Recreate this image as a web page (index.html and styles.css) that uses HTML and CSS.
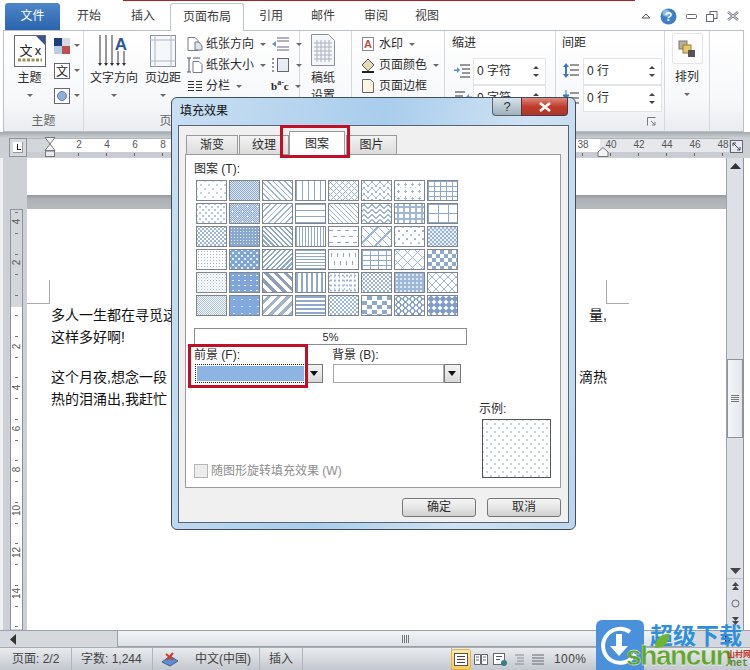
FILE: index.html
```html
<!DOCTYPE html>
<html>
<head>
  <meta charset="utf-8">
  <title>填充效果</title>
  <link rel="stylesheet" href="styles.css">
</head>
<body>
<div class="window">

  <div class="topline"></div>

  <nav class="tabs">
    <span class="tab-file">文件</span>
    <span class="tab t-start">开始</span>
    <span class="tab t-insert">插入</span>
    <span class="tab tab-active">页面布局</span>
    <span class="tab t-ref">引用</span>
    <span class="tab t-mail">邮件</span>
    <span class="tab t-review">审阅</span>
    <span class="tab t-view">视图</span>
    <div class="win-ctrls">
      <svg width="10" height="8" viewBox="0 0 10 8"><path d="M1 6l4-4 4 4z" fill="none" stroke="#555"/></svg>
      <svg width="17" height="17" viewBox="0 0 17 17"><circle cx="8.5" cy="8.5" r="8" fill="#3d7fc9"/><circle cx="6" cy="5" r="3.5" fill="#8dbbe8"/><text x="8.5" y="13" text-anchor="middle" class="help-mark">?</text></svg>
      <svg width="11" height="7" viewBox="0 0 11 7"><rect x=".5" y="1.5" width="10" height="4" rx="1" fill="#fff" stroke="#667"/></svg>
      <svg width="12" height="11" viewBox="0 0 12 11"><rect x="4" y=".5" width="7" height="7" fill="#fff" stroke="#667"/><rect x=".5" y="3.5" width="7" height="7" fill="#fff" stroke="#667"/></svg>
      <svg width="12" height="10" viewBox="0 0 12 10"><path d="M1 1l10 8M11 1L1 9" stroke="#778" stroke-width="2.4"/><path d="M1 1l10 8M11 1L1 9" stroke="#fff" stroke-width=".8"/></svg>
    </div>
  </nav>

  <section class="ribbon">

    <div class="group g-theme">
      <div class="group-body">
        <div class="big-btn theme-btn">
          <svg width="32" height="32" viewBox="0 0 32 32"><rect x=".5" y=".5" width="31" height="31" fill="#fff" stroke="#667"/><path d="M22 1h9v9z" fill="#36558f"/><text x="12" y="20" class="theme-text">文</text><text x="24" y="20" class="theme-text">x</text><path d="M4 25h24" stroke="#9c8f55" stroke-width="3" stroke-dasharray="3 1.5"/></svg>
          <span class="big-label">主题</span>
          <i class="caret"></i>
        </div>
        <div class="theme-side">
          <div class="side-item"><svg width="16" height="16" viewBox="0 0 16 16"><rect width="8" height="8" fill="#1f3f7a"/><rect x="8" width="8" height="8" fill="#d9d9e6"/><rect y="8" width="8" height="8" fill="#b9cde6"/><rect x="8" y="8" width="8" height="8" fill="#c0504d"/></svg><i class="caret"></i></div>
          <div class="side-item"><svg width="16" height="16" viewBox="0 0 16 16"><rect x=".5" y=".5" width="15" height="15" fill="#fff" stroke="#667"/><text x="8" y="13" text-anchor="middle" class="icon-text">文</text></svg><i class="caret"></i></div>
          <div class="side-item"><svg width="16" height="16" viewBox="0 0 16 16"><rect x=".5" y=".5" width="15" height="15" fill="#fff" stroke="#667"/><circle cx="8" cy="8" r="4.5" fill="#8fb0dc" stroke="#5b7fb5"/></svg><i class="caret"></i></div>
        </div>
      </div>
      <div class="group-label">主题</div>
    </div>

    <div class="group g-page">
      <div class="group-body">
        <div class="big-btn dir-btn">
          <svg width="32" height="32" viewBox="0 0 32 32"><path d="M2 0v30M8 0v30M14 0v30M20 16v14M26 16v14" stroke="#333"/><path d="M0 28l2 3 2-3zM6 28l2 3 2-3zM12 28l2 3 2-3zM18 28l2 3 2-3zM24 28l2 3 2-3z" fill="#333"/><text x="23" y="15" text-anchor="middle" class="dir-a">A</text></svg>
          <span class="big-label">文字方向</span>
          <i class="caret"></i>
        </div>
        <div class="big-btn margin-btn">
          <svg width="26" height="32" viewBox="0 0 26 32"><rect x=".5" y=".5" width="25" height="31" fill="#f5f8fb" stroke="#8a929c"/><path d="M5 0v32M21 0v32M0 5h26M0 26h26" stroke="#aeb6c0"/></svg>
          <span class="big-label">页边距</span>
          <i class="caret"></i>
        </div>
        <div class="small-col">
          <div class="small-item"><svg width="16" height="14" viewBox="0 0 16 14"><path d="M1 .5h7l3 3v10H1z" fill="#fff" stroke="#778"/><path d="M8 5h4l3 4v4H8z" fill="#dde3ea" stroke="#778"/></svg>纸张方向<i class="caret"></i></div>
          <div class="small-item"><svg width="16" height="16" viewBox="0 0 16 16"><path d="M6 4.500h6l3 3v8H6z" fill="#fff" stroke="#778"/><path d="M2 1v14M0 1h4M0 15h4M6 1h7" stroke="#556"/></svg>纸张大小<i class="caret"></i></div>
          <div class="small-item"><svg width="16" height="12" viewBox="0 0 16 12"><path d="M1 1.500h6M9 1.500h6M1 4.500h6M9 4.500h6M1 7.500h6M9 7.500h6M1 10.500h6M9 10.500h6" stroke="#333"/></svg>分栏<i class="caret"></i></div>
        </div>
        <div class="small-col break-col">
          <div class="small-item"><svg width="19" height="14" viewBox="0 0 19 14"><path d="M6 1h12M6 4h12M6 10h12M6 13h12" stroke="#667"/><path d="M1 7l4-3v6z" fill="#6c94c6"/></svg><i class="caret"></i></div>
          <div class="small-item"><svg width="19" height="14" viewBox="0 0 19 14"><path d="M1 1h2M1 5h2M1 9h2M1 13h2" stroke="#333"/><rect x="6.500" y=".5" width="11" height="13" fill="#e8edf3" stroke="#667"/></svg><i class="caret"></i></div>
          <div class="small-item"><span class="hyph">b<sup>a-</sup>c</span><i class="caret"></i></div>
        </div>
      </div>
      <div class="group-label page-label">页面设置</div>
    </div>

    <div class="group g-paper">
      <div class="group-body">
        <div class="big-btn paper-btn">
          <svg width="24" height="32" viewBox="0 0 24 32"><path d="M.5 .5h17l6 6v25H.5z" fill="#f4f6f8" stroke="#8a929c"/><path d="M3 9h18M3 13h18M3 17h18M3 21h18M3 25h18M6 6v22M10 6v22M14 6v22M18 6v22" stroke="#aab2bd"/></svg>
          <span class="big-label">稿纸<br>设置</span>
        </div>
      </div>
    </div>

    <div class="group g-bg">
      <div class="small-col bg-col">
        <div class="small-item"><svg width="15" height="14" viewBox="0 0 15 14"><rect x="1.500" y=".5" width="11" height="13" fill="#fff" stroke="#889"/><text x="7" y="11" text-anchor="middle" class="wm-a">A</text></svg>水印<i class="caret"></i></div>
        <div class="small-item"><svg width="15" height="15" viewBox="0 0 15 15"><path d="M1 7l6-6 6 6-6 6z" fill="#e8d9b0" stroke="#556"/><path d="M1 14h12" stroke="#222" stroke-width="2"/></svg>页面颜色<i class="caret"></i></div>
        <div class="small-item"><svg width="15" height="14" viewBox="0 0 15 14"><path d="M1.500 .5h8l3 3v10h-11z" fill="#fdf6dc" stroke="#667"/></svg>页面边框</div>
      </div>
    </div>

    <div class="group g-indent">
      <div class="field-head">缩进</div>
      <div class="field-row">
        <svg width="18" height="14" viewBox="0 0 18 14"><path d="M6 1h10M8 5h8M8 9h8M6 13h10" stroke="#333"/><path d="M0 5.500h3V3l3 3-3 3V7H0z" fill="#5b8fd0"/></svg>
        <div class="spin"><span>0 字符</span><b class="spin-arrows"></b></div>
      </div>
      <div class="field-row">
        <svg width="18" height="14" viewBox="0 0 18 14"><path d="M1 1h10M1 5h8M1 9h8M1 13h10" stroke="#333"/><path d="M18 5.500h-3V3l-3 3 3 3V7h3z" fill="#5b8fd0"/></svg>
        <div class="spin"><span>0 字符</span><b class="spin-arrows"></b></div>
      </div>
    </div>

    <div class="group g-space">
      <div class="field-head">间距</div>
      <div class="field-row">
        <svg width="18" height="16" viewBox="0 0 18 16"><path d="M8 2h9M8 7h9M8 12h9" stroke="#333"/><path d="M4 0l3 4H1zM4 15l3-4H1z" fill="#3b76c4"/><path d="M3 4h2v7H3z" fill="#3b76c4"/></svg>
        <div class="spin"><span>0 行</span><b class="spin-arrows"></b></div>
      </div>
      <div class="field-row">
        <svg width="18" height="16" viewBox="0 0 18 16"><path d="M8 3h9M8 8h9M8 13h9" stroke="#333"/><path d="M4 0v6M1 5l3 4 3-4zM4 15v-2" stroke="#3b76c4" fill="#3b76c4"/></svg>
        <div class="spin"><span>0 行</span><b class="spin-arrows"></b></div>
      </div>
      <svg class="launcher" width="9" height="9" viewBox="0 0 9 9"><path d="M.5 8.500v-8h8M4 4l4 4M5 8h3V5" fill="none" stroke="#778"/></svg>
    </div>

    <div class="group g-arrange">
      <div class="arrange-box">
        <svg width="18" height="18" viewBox="0 0 18 18"><rect x="1" y="1" width="8" height="8" fill="#b9b09a" stroke="#777"/><rect x="5" y="5" width="8" height="8" fill="#e8c76a" stroke="#9a7a2a"/><rect x="10" y="10" width="7" height="7" fill="#555"/></svg>
      </div>
      <span class="big-label">排列</span>
      <i class="caret"></i>
    </div>

  </section>

  <div class="rulerbar">
    <div class="ruler-corner"><span></span></div>
    <div class="hruler">
      <span>2</span><span>4</span><span>6</span><span>8</span><span>10</span><span>12</span><span>14</span><span>16</span><span>18</span><span>20</span><span>22</span><span>24</span><span>26</span><span>28</span><span>30</span><span>32</span><span>34</span><span>36</span><span>38</span><span>40</span><span>42</span><span>44</span><span>46</span><span>48</span>
      <svg class="indent-left" width="12" height="20" viewBox="0 0 12 20"><path d="M1 .5h10L6 7l5 6.500H1L6 7z" fill="#f2f3f5" stroke="#777"/><rect x="1.500" y="14" width="9" height="5.500" fill="#e8eaed" stroke="#777"/></svg>
      <svg class="indent-right" width="12" height="10" viewBox="0 0 12 10"><path d="M1 9.500V5l5-4.500L11 5v4.500z" fill="#f2f3f5" stroke="#777"/></svg>
    </div>
    <div class="ruler-toggle">
      <svg width="13" height="13" viewBox="0 0 13 13"><rect x=".5" y=".5" width="12" height="12" fill="#e6e9ed" stroke="#667"/><path d="M3 3l7 7M3 3h3M3 3v3M10 10H7M10 10V7" fill="none" stroke="#445"/></svg>
    </div>
  </div>

  <div class="docrow">
    <div class="vruler-col">
      <div class="vruler">
        <div class="vruler-top"><span>4</span><span>2</span></div>
        <div class="vruler-main"><span>2</span><span>4</span><span>6</span><span>8</span><span>10</span><span>12</span><span>14</span></div>
      </div>
    </div>

    <main class="page-area">
      <div class="page-end"></div>
      <div class="page-gap"></div>
      <div class="page-head">
        <span class="crop crop-left"></span>
        <span class="crop crop-right"></span>
      </div>
      <div class="page-text">
        <p class="line"><span>多人一生都在寻觅这</span><span>量,</span></p>
        <p class="line"><span>这样多好啊!</span></p>
        <p class="line para-start"><span>这个月夜,想念一段</span><span>滴热</span></p>
        <p class="line"><span>热的泪涌出,我赶忙</span></p>
      </div>
    </main>

    <div class="vscroll">
      <svg class="vs-up" width="11" height="6" viewBox="0 0 11 6"><path d="M5.500 0L11 6H0z" fill="#333"/></svg>
      <div class="vs-thumb"><i></i></div>
      <svg class="vs-down" width="11" height="6" viewBox="0 0 11 6"><path d="M5.500 6L11 0H0z" fill="#444"/></svg>
      <div class="vs-browse">
        <svg width="9" height="9" viewBox="0 0 9 9"><path d="M4.500 0l3.500 4H1zM4.500 4l3.500 4H1z" fill="#444"/></svg>
        <svg width="9" height="9" viewBox="0 0 9 9"><circle cx="4.500" cy="4.500" r="3.500" fill="none" stroke="#667"/></svg>
        <svg width="9" height="9" viewBox="0 0 9 9"><path d="M4.500 5l3.500-4H1zM4.500 9l3.500-4H1z" fill="#444"/></svg>
      </div>
    </div>
  </div>

  <div class="hscroll">
    <svg class="hs-left" width="6" height="11" viewBox="0 0 6 11"><path d="M0 5.500L6 0v11z" fill="#333"/></svg>
    <div class="hs-thumb"><i></i></div>
    <svg class="hs-right" width="6" height="11" viewBox="0 0 6 11"><path d="M6 5.500L0 0v11z" fill="#333"/></svg>
  </div>

  <footer class="status">
    <span class="st st-page">页面: 2/2</span>
    <span class="st st-words">字数: 1,244</span>
    <span class="st st-lang">
      <svg width="18" height="16" viewBox="0 0 18 16"><path d="M1 11l8-6 8 5-8 5z" fill="#5b8fd0" stroke="#3b5f95"/><path d="M5 3l7 6M12 2L6 9" stroke="#c8402f" stroke-width="2"/></svg>
      <em>中文(中国)</em>
    </span>
    <span class="st st-ins">插入</span>
    <div class="views">
      <span class="view view-on"><svg width="14" height="13" viewBox="0 0 14 13"><rect x=".5" y=".5" width="13" height="12" fill="#fff" stroke="#555"/><path d="M3 3.500h8M3 6.500h8M3 9.500h8" stroke="#444"/></svg></span>
      <span class="view"><svg width="14" height="13" viewBox="0 0 14 13"><path d="M.5 1.500h6v10h-6zM7.500 1.500h6v10h-6zM2 4h3M2 7h3M9 4h3M9 7h3" fill="#fff" stroke="#667"/></svg></span>
      <span class="view"><svg width="14" height="13" viewBox="0 0 14 13"><rect x=".5" y=".5" width="11" height="11" fill="#fff" stroke="#667"/><path d="M3 3.500h6M3 6.500h4" stroke="#556"/><circle cx="11" cy="10" r="3" fill="#3c7a8e"/></svg></span>
      <span class="view"><svg width="14" height="13" viewBox="0 0 14 13"><path d="M3 2h9M5 5h7M5 8h7M3 11h9" stroke="#889"/></svg></span>
      <span class="view"><svg width="14" height="13" viewBox="0 0 14 13"><path d="M1 2h12M1 5h12M1 8h12M1 11h12" stroke="#667"/></svg></span>
    </div>
    <span class="zoom-val">100%</span>
  </footer>

  <!-- dialog floats over the document -->
  <div class="dialog">
    <div class="dlg-title">
      <span>填充效果</span>
      <div class="dlg-btns">
        <span class="dlg-help">?</span>
        <span class="dlg-close">
          <svg width="14" height="10" viewBox="0 0 14 10"><path d="M2 1l10 8M12 1L2 9" stroke="#fff" stroke-width="2.600"/></svg>
        </span>
      </div>
    </div>
    <div class="dlg-panel">
      <div class="dlg-tabs">
        <span class="dtab dt-grad">渐变</span>
        <span class="dtab dt-tex">纹理</span>
        <span class="dtab dtab-on">图案</span>
        <span class="dtab dt-pic">图片</span>
      </div>
      <div class="dlg-page">
        <div class="dlg-label">图案 (T):</div>
        <div class="patterns">
          <i class="sw p-d5"></i><i class="sw p-c50"></i><i class="sw p-bs"></i><i class="sw p-v"></i><i class="sw p-zs"></i><i class="sw p-wave"></i><i class="sw p-conf"></i><i class="sw p-grid"></i>
          <i class="sw p-d10"></i><i class="sw p-c60"></i><i class="sw p-fs"></i><i class="sw p-h"></i><i class="sw p-fd"></i><i class="sw p-wave2"></i><i class="sw p-dgrid"></i><i class="sw p-lgrid"></i>
          <i class="sw p-d20"></i><i class="sw p-d70"></i><i class="sw p-bw"></i><i class="sw p-vd"></i><i class="sw p-hd"></i><i class="sw p-dbrick"></i><i class="sw p-spar"></i><i class="sw p-chk"></i>
          <i class="sw p-d25"></i><i class="sw p-d75"></i><i class="sw p-fw"></i><i class="sw p-hn"></i><i class="sw p-vdash"></i><i class="sw p-brick"></i><i class="sw p-weave"></i><i class="sw p-chkl"></i>
          <i class="sw p-d30"></i><i class="sw p-d80"></i><i class="sw p-bt"></i><i class="sw p-vt"></i><i class="sw p-conf2"></i><i class="sw p-small"></i><i class="sw p-sph"></i><i class="sw p-dia"></i>
          <i class="sw p-d40"></i><i class="sw p-d90"></i><i class="sw p-ft"></i><i class="sw p-ht"></i><i class="sw p-ddia"></i><i class="sw p-lconf"></i><i class="sw p-scale"></i><i class="sw p-ball"></i>
        </div>
        <div class="pat-name">5%</div>
        <div class="color-row">
          <div class="color-col">
            <div class="dlg-label">前景 (F):</div>
            <div class="combo">
              <div class="combo-val combo-focus"><span></span></div>
              <b class="combo-btn"></b>
            </div>
          </div>
          <div class="color-col">
            <div class="dlg-label">背景 (B):</div>
            <div class="combo">
              <div class="combo-val"></div>
              <b class="combo-btn"></b>
            </div>
          </div>
        </div>
        <div class="lower">
          <label class="rotate"><span class="check"></span>随图形旋转填充效果 (W)</label>
          <div class="sample">
            <div class="dlg-label">示例:</div>
            <div class="sample-box"></div>
          </div>
        </div>
      </div>
      <div class="dlg-actions">
        <span class="btn">确定</span>
        <span class="btn">取消</span>
      </div>
    </div>
    <span class="mark mark-tab"></span>
    <span class="mark mark-fore"></span>
  </div>

  <!-- site watermark -->
  <div class="watermark">
    <div class="wm-square">
      <svg width="48" height="50" viewBox="0 0 48 50"><path d="M34 12a17 17 0 1 0 5 22" fill="none" stroke="#fff" stroke-width="4"/><path d="M20 14h6v12h6L23 36 14 26h6z" fill="#fff"/></svg>
    </div>
    <span class="wm-cn">超级下载</span>
    <svg class="wm-leaf" width="16" height="16" viewBox="0 0 16 16"><path d="M1 15C1 6 7 1 15 1c0 9-5 14-14 14z" fill="#6fb52c"/></svg>
    <span class="wm-en">shancun</span>
    <span class="wm-site">山村网</span>
    <span class="wm-net">.net</span>
  </div>

</div>
</body>
</html>
```

FILE: styles.css
```css
html, body {
  margin: 0;
  padding: 0;
}

body {
  background: #fff;
  color: #2b2b2b;
  font: 12px/1.2 "Liberation Sans", "Noto Sans CJK SC", sans-serif;
}

.window {
  position: relative;
  width: 750px;
  height: 670px;
  overflow: hidden;
  background: #fff;
}

.topline {
  height: 1px;
  margin: 0 115px 0 123px;
  background: #a8222a;
}

/* tab row */

.tabs {
  display: flex;
  align-items: flex-end;
  height: 29px;
  padding-left: 5px;
}

.tab-file {
  width: 55px;
  height: 27px;
  line-height: 26px;
  text-align: center;
  color: #fff;
  background: linear-gradient(#4f86c8, #2a64ad);
  border-radius: 3px 3px 0 0;
}

.tab {
  height: 27px;
  line-height: 27px;
  color: #3b3b3b;
  font-size: 12px;
}

.t-start { margin-left: 17px; }
.t-insert { margin-left: 30px; }
.t-ref { margin-left: 15px; }
.t-mail { margin-left: 28px; }
.t-review { margin-left: 29px; }
.t-view { margin-left: 27px; }

.tab-active {
  position: relative;
  z-index: 1;
  box-sizing: border-box;
  width: 74px;
  height: 28px;
  margin-left: 15px;
  margin-bottom: -1px;
  text-align: center;
  background: #fff;
  border: 1px solid #c0c6ce;
  border-bottom: 0;
  border-radius: 3px 3px 0 0;
}

.win-ctrls {
  display: flex;
  align-items: center;
  gap: 9px;
  height: 28px;
  margin-left: auto;
  margin-right: 11px;
}

.help-mark {
  font: bold 13px "Liberation Sans", sans-serif;
  fill: #fff;
}

/* ribbon */

.ribbon {
  display: flex;
  height: 102px;
  box-sizing: border-box;
  margin: 0 6px 0 3px;
  border: 1px solid #b9c0c9;
  background: linear-gradient(#fff, #f7f8fa 70%, #e9ecf0);
}

.group {
  display: flex;
  flex-direction: column;
  box-sizing: border-box;
  border-right: 1px solid #d5d9df;
}

.group-body {
  display: flex;
  flex: 1;
}

.group-label {
  height: 20px;
  line-height: 20px;
  text-align: center;
  color: #666;
}

.g-theme { width: 80px; }
.g-page { width: 216px; }
.g-paper { width: 52px; }
.g-bg { width: 93px; }
.g-indent { width: 111px; padding-left: 7px; }
.g-space { width: 109px; padding-left: 6px; position: relative; }
.g-arrange { width: 45px; align-items: center; }

.page-label {
  padding-right: 16px;
}

.big-btn {
  display: flex;
  flex-direction: column;
  align-items: center;
  padding-top: 4px;
}

.big-label {
  margin-top: 2px;
  line-height: 18px;
  text-align: center;
  white-space: nowrap;
}

.caret {
  display: inline-block;
  width: 0;
  height: 0;
  margin: 6px 0 0 4px;
  border: 3px solid transparent;
  border-top: 3px solid #6a6a6a;
  border-bottom: 0;
}

.big-btn .caret {
  margin: 7px 0 0;
}

.theme-btn {
  width: 49px;
  padding-left: 1px;
}

.theme-text {
  font: 13px "Noto Sans CJK SC", sans-serif;
  fill: #222;
  text-anchor: middle;
}

.icon-text {
  font: 12px "Noto Sans CJK SC", sans-serif;
  fill: #222;
}

.theme-side {
  display: flex;
  flex-direction: column;
  gap: 9px;
  padding-top: 7px;
}

.side-item {
  display: flex;
  align-items: flex-start;
  height: 16px;
}

.dir-btn {
  width: 48px;
  margin-left: 6px;
}

.dir-a {
  font: bold 17px "Liberation Sans", sans-serif;
  fill: #2f5597;
}

.wm-a {
  font: bold 11px "Liberation Sans", sans-serif;
  fill: #c0504d;
}

.margin-btn {
  width: 36px;
  margin-left: 7px;
}

.small-col {
  display: flex;
  flex-direction: column;
  gap: 5px;
  padding-top: 5px;
  margin-left: 6px;
}

.small-item {
  display: flex;
  align-items: center;
  gap: 3px;
  height: 16px;
  white-space: nowrap;
}

.small-item .caret {
  margin: 0 0 0 3px;
}

.small-item svg {
  flex: none;
}

.break-col {
  margin-left: 5px;
}

.hyph {
  font: bold 11px "Liberation Serif", serif;
}

.hyph sup {
  font-size: 8px;
  line-height: 0;
}

.paper-btn {
  width: 100%;
  padding-top: 3px;
  padding-left: 11px;
  align-items: flex-start;
}

.paper-btn .big-label {
  margin-top: 3px;
}

.bg-col {
  margin-left: 9px;
}

.field-head {
  height: 15px;
  margin-bottom: 6px;
  padding-top: 5px;
  line-height: 15px;
}

.field-row {
  display: flex;
  align-items: center;
  gap: 3px;
  height: 27px;
}

.g-indent .field-row {
  gap: 1px;
  padding-left: 2px;
}

.spin {
  display: flex;
  justify-content: space-between;
  align-items: center;
  box-sizing: border-box;
  width: 73px;
  height: 27px;
  margin-bottom: -1px;
  padding: 0 6px 0 3px;
  background: #fff;
  border: 1px solid #e0e3e8;
}

.g-space .spin {
  width: 79px;
}

.spin-arrows {
  position: relative;
  width: 0;
  height: 11px;
  border: 3px solid transparent;
  border-top: 0;
  border-bottom: 0;
}

.spin-arrows::before,
.spin-arrows::after {
  content: "";
  position: absolute;
  left: -3px;
  border: 3px solid transparent;
}

.spin-arrows::before {
  top: 0;
  border-top: 0;
  border-bottom-color: #444;
}

.spin-arrows::after {
  bottom: 0;
  border-bottom: 0;
  border-top-color: #444;
}

.launcher {
  position: absolute;
  right: 8px;
  bottom: 5px;
}

.arrange-box {
  display: flex;
  align-items: center;
  justify-content: center;
  box-sizing: border-box;
  width: 31px;
  height: 31px;
  margin-top: 2px;
  border: 1px solid #e3e5e8;
  border-radius: 2px;
}

.g-arrange .big-label {
  margin-top: 4px;
}

.g-arrange .caret {
  margin: 7px 0 0;
}

/* rulers */

.rulerbar {
  display: flex;
  height: 26px;
  padding-top: 6px;
  box-sizing: border-box;
  background: linear-gradient(#a4a9af, #ccd0d5 6px, #ccd0d5);
}

.ruler-corner {
  box-sizing: border-box;
  width: 18px;
  height: 19px;
  margin-left: 9px;
  padding: 3px;
  border: 1px solid #8c939b;
  background: #d5d8dc;
}

.ruler-corner span {
  position: relative;
  display: block;
  box-sizing: border-box;
  height: 11px;
  background: #fff;
  border-right: 1px solid #999;
  border-bottom: 1px solid #999;
}

.ruler-corner span::after {
  content: "";
  position: absolute;
  left: 4px;
  top: 2px;
  width: 3px;
  height: 5px;
  border-left: 1px solid #222;
  border-bottom: 1px solid #222;
}

.hruler {
  position: relative;
  display: flex;
  width: 702px;
  height: 19px;
  padding-left: 38px;
  box-sizing: border-box;
  background:
    linear-gradient(#c8ccd2, #c8ccd2) 0 13px / 100% 6px no-repeat,
    linear-gradient(to right, #d3d6db 23px, #fff 23px, #fff 573px, #e6e8eb 573px);
  border-top: 1px solid #b0b5bb;
}

.hruler span {
  position: relative;
  flex: none;
  width: 28px;
  line-height: 12px;
  text-align: center;
  font-size: 10px;
  color: #555;
}

.hruler span::after {
  content: "";
  position: absolute;
  left: 13px;
  top: 14px;
  width: 1px;
  height: 3px;
  background: #666;
}

.indent-left {
  position: absolute;
  left: 17px;
  top: -2px;
}

.indent-right {
  position: absolute;
  left: 570px;
  top: 8px;
}

.ruler-toggle {
  margin-left: 1px;
  padding-top: 2px;
}

.docrow {
  display: flex;
  height: 472px;
}

.vruler-col {
  flex: none;
  box-sizing: border-box;
  width: 27px;
  padding: 51px 0 0 7px;
  background: #cdd1d6;
  border-left: 3px solid #eef0f2;
}

.vruler {
  width: 13px;
  height: 421px;
  box-sizing: border-box;
  border: 1px solid #8c939b;
  border-bottom: 0;
  color: #555;
  font-size: 10px;
}

.vruler-top,
.vruler-main {
  position: relative;
  background-image: repeating-linear-gradient(#777 0 1px, transparent 1px 20.75px);
  background-repeat: no-repeat;
  background-size: 3px 100%;
}

.vruler-top {
  height: 97px;
  background-color: #d3d6db;
  background-position: 4px 2px;
}

.vruler-main {
  height: 322px;
  background-color: #fff;
  background-position: 4px 8px;
}

.vruler span {
  position: absolute;
  left: 0;
  width: 11px;
  line-height: 11px;
  text-align: center;
  transform: rotate(-90deg);
}

.vruler-top span:nth-child(1) { top: 6px; }
.vruler-top span:nth-child(2) { top: 47px; }
.vruler-main span:nth-child(1) { top: 34px; }
.vruler-main span:nth-child(2) { top: 75px; }
.vruler-main span:nth-child(3) { top: 116px; }
.vruler-main span:nth-child(4) { top: 157px; }
.vruler-main span:nth-child(5) { top: 198px; }
.vruler-main span:nth-child(6) { top: 240px; }
.vruler-main span:nth-child(7) { top: 281px; }

.page-area {
  flex: none;
  width: 699px;
  background: #fff;
}

.page-end {
  height: 37px;
}

.page-gap {
  height: 14px;
  background: linear-gradient(#959a9f, #aeb2b6 30%, #b6babe);
}

.page-head {
  display: flex;
  justify-content: space-between;
  box-sizing: border-box;
  width: 602px;
  height: 95px;
  padding-top: 71px;
}

.crop {
  width: 23px;
  height: 24px;
  box-sizing: border-box;
  border-bottom: 1px solid #aaa;
}

.crop-left {
  border-right: 1px solid #aaa;
}

.crop-right {
  border-left: 1px solid #aaa;
}

.page-text {
  width: 556px;
  margin-left: 24px;
  font-size: 14px;
  line-height: 22px;
  color: #111;
}

.line {
  display: flex;
  justify-content: space-between;
  margin: 0;
}

.para-start {
  margin-top: 18px;
}

.vscroll {
  display: flex;
  flex-direction: column;
  align-items: center;
  flex: none;
  box-sizing: border-box;
  width: 18px;
  padding-top: 5px;
  background: #dde1e7;
  border-left: 1px solid #9ba2aa;
  border-right: 1px solid #8c939b;
}

.vs-thumb {
  display: flex;
  align-items: center;
  justify-content: center;
  box-sizing: border-box;
  width: 16px;
  height: 79px;
  margin-top: 190px;
  background: linear-gradient(to right, #f4f6f8, #e2e6eb);
  border: 1px solid #8c939b;
}

.vs-thumb i,
.hs-thumb i {
  display: block;
  width: 8px;
  height: 7px;
  background: repeating-linear-gradient(#777 0 1px, transparent 1px 2px);
}

.vs-down {
  margin-top: 130px;
}

.vs-browse {
  display: flex;
  flex-direction: column;
  align-items: center;
  gap: 8px;
  width: 100%;
  margin-top: 4px;
  padding-top: 3px;
  border-top: 1px solid #bcc2c9;
}

.hscroll {
  display: flex;
  align-items: center;
  height: 17px;
  box-sizing: border-box;
  padding-left: 10px;
  background: #d5d9de;
  border-top: 1px solid #9ba2aa;
}

.hs-thumb {
  display: flex;
  align-items: center;
  justify-content: center;
  box-sizing: border-box;
  width: 575px;
  height: 16px;
  margin-left: 101px;
  background: linear-gradient(#f2f4f6, #dde1e6);
  border-left: 1px solid #9ba2aa;
  border-bottom: 1px solid #9ba2aa;
}

.hs-thumb i {
  width: 7px;
  height: 8px;
  background: repeating-linear-gradient(to right, #777 0 1px, transparent 1px 2px);
}

.hs-right {
  margin-left: 33px;
}

/* status bar */

.status {
  display: flex;
  align-items: center;
  height: 23px;
  box-sizing: border-box;
  background: linear-gradient(#e9ebee, #c3c8ce);
  border-top: 1px solid #a8aeb5;
  color: #444;
}

.st {
  display: flex;
  align-items: center;
  height: 100%;
  box-sizing: border-box;
  border-right: 1px solid #b1b6bc;
  white-space: nowrap;
}

.st-page { width: 72px; padding-left: 12px; }
.st-words { width: 81px; padding-left: 9px; }
.st-lang { width: 107px; padding-left: 8px; }
.st-ins { width: 43px; padding-left: 9px; }

.st-lang em {
  margin-left: 16px;
  font-style: normal;
}

.views {
  display: flex;
  align-items: center;
  gap: 3px;
  height: 100%;
  margin-left: 148px;
  border-left: 1px solid #b1b6bc;
}

.view {
  display: flex;
  align-items: center;
  justify-content: center;
  width: 16px;
  height: 19px;
}

.view-on {
  width: 18px;
  background: linear-gradient(#fdeaa5, #f8c95b);
  border-radius: 2px;
  box-shadow: 0 0 0 1px #e0b44f;
}

.zoom-val {
  margin-left: 8px;
  letter-spacing: .4px;
}

/* dialog */

.dialog {
  position: absolute;
  left: 171px;
  top: 97px;
  width: 405px;
  height: 433px;
  box-sizing: border-box;
  border: 1px solid #3f4d5c;
  border-radius: 6px;
  background: linear-gradient(100deg, #c9dff2, #a9cdec 45%, #cfe2f3 75%, #bcd6ee);
}

.dlg-title {
  display: flex;
  justify-content: space-between;
  height: 27px;
  padding-left: 8px;
  line-height: 27px;
  color: #111;
}

.dlg-btns {
  display: flex;
  height: 18px;
  margin-right: 7px;
}

.dlg-help {
  box-sizing: border-box;
  width: 29px;
  line-height: 17px;
  text-align: center;
  font-size: 13px;
  color: #333;
  background: linear-gradient(#d8e3ec, #9fb0bd);
  border: 1px solid #56626e;
  border-top: 0;
  border-right: 0;
  border-radius: 0 0 0 4px;
}

.dlg-close {
  display: flex;
  align-items: center;
  justify-content: center;
  box-sizing: border-box;
  width: 47px;
  background: linear-gradient(#d98b7c, #c23a2c 50%, #a9382c);
  border: 1px solid #56323a;
  border-top: 0;
  border-radius: 0 0 4px 0;
}

.dlg-panel {
  box-sizing: border-box;
  width: 391px;
  height: 398px;
  margin-left: 6px;
  padding: 5px 0 0 6px;
  background: #f0f0f0;
  border: 1px solid #566473;
}

.dlg-tabs {
  display: flex;
  align-items: flex-end;
  height: 23px;
  padding-left: 1px;
}

.dtab {
  box-sizing: border-box;
  height: 19px;
  line-height: 18px;
  text-align: center;
  background: linear-gradient(#f2f2f2, #dcdcdc);
  border: 1px solid #9a9a9a;
  border-bottom: 0;
}

.dt-grad { width: 52px; }
.dt-tex { width: 50px; margin-left: 1px; }
.dt-pic { width: 51px; margin-left: 1px; }

.dtab-on {
  position: relative;
  z-index: 1;
  width: 56px;
  height: 24px;
  margin-bottom: -1px;
  line-height: 24px;
  background: #fff;
}

.dlg-page {
  display: flex;
  flex-direction: column;
  box-sizing: border-box;
  width: 376px;
  height: 334px;
  padding: 7px 8px 9px;
  background: #fff;
  border: 1px solid #9a9a9a;
}

.dlg-label {
  height: 14px;
  line-height: 14px;
}

.patterns {
  display: grid;
  grid-template-columns: repeat(8, 31px);
  grid-auto-rows: 21px;
  gap: 2px;
  margin: 4px 0 0 2px;
}

.pat-name {
  box-sizing: border-box;
  width: 273px;
  height: 17px;
  margin-top: 12px;
  line-height: 16px;
  text-align: center;
  border: 1px solid #8c8c8c;
  font-size: 11px;
}

.color-row {
  display: flex;
  gap: 9px;
  margin-top: 3px;
}

.color-col {
  width: 129px;
}

.color-col .combo {
  margin-top: 2px;
}

.combo {
  display: flex;
  width: 128px;
  height: 19px;
  margin-left: 1px;
}

.combo-val {
  flex: 1;
  box-sizing: border-box;
  padding: 2px;
  background: #fff;
  border: 1px solid #a8a8a8;
}

.combo-focus {
  padding: 1px;
  border: 1px dotted #222;
}

.combo-focus span {
  display: block;
  height: 100%;
  background: #8db4e3;
}

.combo-btn {
  position: relative;
  flex: none;
  box-sizing: border-box;
  width: 17px;
  background: linear-gradient(#f4f4f4, #d8d8d8);
  border: 1px solid #777;
}

.combo-btn::after {
  content: "";
  position: absolute;
  left: 3px;
  top: 6px;
  border: 4px solid transparent;
  border-top: 5px solid #111;
  border-bottom: 0;
}

.lower {
  display: flex;
  flex: 1;
  align-items: flex-end;
  justify-content: space-between;
}

.rotate {
  display: flex;
  align-items: center;
  gap: 3px;
  height: 14px;
  color: #8d8d8d;
}

.check {
  flex: none;
  width: 12px;
  height: 12px;
  background: #ececec;
  border: 1px solid #b5b5b5;
}

.sample {
  width: 73px;
}

.sample-box {
  box-sizing: border-box;
  width: 69px;
  height: 59px;
  margin: 3px 0 0 3px;
  border: 1px solid #555;
  background:
    radial-gradient(circle, #c2d3e6 0 .8px, transparent 1px) 0 0 / 8px 8px,
    radial-gradient(circle, #c2d3e6 0 .8px, transparent 1px) 4px 4px / 8px 8px,
    #fff;
}

.dlg-actions {
  display: flex;
  justify-content: flex-end;
  gap: 11px;
  width: 376px;
  margin-top: 10px;
}

.btn {
  box-sizing: border-box;
  width: 74px;
  height: 19px;
  line-height: 17px;
  text-align: center;
  background: linear-gradient(#f5f5f5, #e6e6e6 50%, #cfcfcf);
  border: 1px solid #777;
  border-radius: 3px;
}

.mark {
  position: absolute;
  box-sizing: border-box;
  border: 3px solid #c00f26;
  z-index: 2;
}

.mark-tab {
  left: 108px;
  top: 27px;
  width: 70px;
  height: 33px;
}

.mark-fore {
  left: 16px;
  top: 246px;
  width: 120px;
  height: 44px;
}

/* pattern swatches */

.sw {
  --p: #9db6d3;
  display: block;
  box-sizing: border-box;
  border: 1px solid #7e858c;
  background-color: #fff;
}

.p-d5 { background-image: radial-gradient(circle, #c2d3e6 0 .8px, transparent 1px), radial-gradient(circle, #c2d3e6 0 .8px, transparent 1px); background-size: 8px 8px; background-position: 0 0, 4px 4px; }
.p-d10 { background-image: radial-gradient(circle, #b3c8e0 0 .8px, transparent 1px), radial-gradient(circle, #b3c8e0 0 .8px, transparent 1px); background-size: 6px 6px; background-position: 0 0, 3px 3px; }
.p-d20 { background-image: radial-gradient(circle, var(--p) 0 .8px, transparent 1px), radial-gradient(circle, var(--p) 0 .8px, transparent 1px); background-size: 4px 4px; background-position: 0 0, 2px 2px; }
.p-d25 { background-image: radial-gradient(circle, var(--p) 0 .9px, transparent 1px); background-size: 3px 3px; }
.p-d30 { background-image: radial-gradient(circle, #a8bed8 0 .9px, transparent 1px), radial-gradient(circle, #a8bed8 0 .9px, transparent 1px); background-size: 3px 3px; background-position: 0 0, 1.5px 1.5px; }
.p-d40 { background-image: repeating-conic-gradient(#afc4dc 0 25%, #f4f7fb 0 50%); background-size: 2px 2px; }
.p-c50 { background-image: repeating-conic-gradient(#8ea9ca 0 25%, #dbe6f2 0 50%); background-size: 2px 2px; }
.p-c60 { background-color: #a9c2df; background-image: radial-gradient(circle, #fff 0 .8px, transparent 1px), repeating-conic-gradient(#8ea9ca 0 25%, #cfdeee 0 50%); background-size: 5px 5px, 2px 2px; }
.p-d70 { background-color: #8aa8cf; background-image: radial-gradient(circle, #e6eef8 0 .8px, transparent 1px); background-size: 3px 3px; }
.p-d75 { background-color: #7fa4d8; background-image: radial-gradient(circle, #e6eef8 0 .9px, transparent 1.1px), radial-gradient(circle, #e6eef8 0 .9px, transparent 1.1px); background-size: 6px 6px; background-position: 0 0, 3px 3px; }
.p-d80 { background-color: #7fa4da; background-image: radial-gradient(circle, #eef4fb 0 .9px, transparent 1.1px); background-size: 6px 5px; }
.p-d90 { background-color: #83aadf; background-image: radial-gradient(circle, #cfe0f4 0 .9px, transparent 1.1px); background-size: 8px 7px; }

.p-bs { background-image: repeating-linear-gradient(45deg, var(--p) 0 1px, #fff 1px 4px); }
.p-fs { background-image: repeating-linear-gradient(-45deg, var(--p) 0 1px, #fff 1px 4px); }
.p-bw { background-image: repeating-linear-gradient(45deg, #8ea9ca 0 1.5px, #fff 1.5px 3.5px); }
.p-fw { background-image: repeating-linear-gradient(-45deg, #8ea9ca 0 1.5px, #fff 1.5px 3.5px); }
.p-bt { background-image: repeating-linear-gradient(45deg, #8f9fb6 0 3px, #fff 3px 7px); }
.p-ft { background-image: repeating-linear-gradient(-45deg, #a3b3c8 0 3px, #fff 3px 7px); }

.p-v { background-image: repeating-linear-gradient(90deg, #8ea9ca 0 1px, #fff 1px 6px); }
.p-vd { background-image: repeating-linear-gradient(90deg, #8ea9ca 0 1px, #fff 1px 3px); }
.p-vt { background-image: repeating-linear-gradient(90deg, #8ea9ca 0 2px, #fff 2px 5px); }
.p-h { background-image: repeating-linear-gradient(#8ea9ca 0 1px, #fff 1px 6px); }
.p-hn { background-image: repeating-linear-gradient(#8ea9ca 0 1px, #fff 1px 3px); }
.p-ht { background-image: repeating-linear-gradient(#8ea9ca 0 2px, #fff 2px 4px); }

.p-grid { background-image: repeating-linear-gradient(90deg, #8ea9ca 0 1px, transparent 1px 6px), repeating-linear-gradient(#8ea9ca 0 1px, transparent 1px 5px); }
.p-lgrid { background-image: repeating-linear-gradient(90deg, #8ea9ca 0 1px, transparent 1px 10px), repeating-linear-gradient(#8ea9ca 0 1px, transparent 1px 9px); }
.p-dgrid { background-image: radial-gradient(circle, var(--p) 0 .7px, transparent .9px), radial-gradient(circle, var(--p) 0 .7px, transparent .9px); background-size: 2px 6px, 6px 2px; }

.p-zs,
.p-wave,
.p-wave2,
.p-fd,
.p-weave,
.p-dbrick,
.p-dia,
.p-small {
  background-image:
    linear-gradient(45deg, transparent 46%, var(--p) 46% 54%, transparent 54%),
    linear-gradient(135deg, transparent 46%, var(--p) 46% 54%, transparent 54%);
}

.p-zs { background-size: 6px 6px; background-position: 0 0, 3px 0; }
.p-wave { background-size: 8px 6px; background-position: 0 0, 4px 0; }
.p-wave2 { background-size: 8px 5px; background-position: 0 0, 4px 0; }
.p-fd { background-image: linear-gradient(45deg, transparent 42%, var(--p) 42% 58%, transparent 58%); background-size: 5px 5px; }
.p-weave { background-size: 10px 10px; background-position: 0 0, 5px 0; }
.p-dbrick { background-image: linear-gradient(45deg, transparent 46%, var(--p) 46% 54%, transparent 54%), linear-gradient(135deg, transparent 46%, var(--p) 46% 54%, transparent 54%); background-size: 8px 8px, 16px 16px; }
.p-dia { background-size: 8px 8px; }
.p-small { background-size: 4px 4px; }

.p-conf,
.p-spar,
.p-conf2,
.p-ddia {
  background-image:
    radial-gradient(circle, var(--p) 0 1px, transparent 1.2px),
    radial-gradient(circle, #b3c8e0 0 .8px, transparent 1px);
  background-size: 7px 7px, 5px 9px;
  background-position: 0 0, 3px 2px;
}

.p-spar { background-size: 8px 8px, 8px 8px; background-position: 0 0, 4px 4px; }
.p-conf2 { background-size: 4px 5px, 5px 4px; }
.p-ddia { background-image: radial-gradient(circle, var(--p) 0 1px, transparent 1.2px), radial-gradient(circle, var(--p) 0 1px, transparent 1.2px); background-size: 4px 4px; background-position: 0 0, 2px 2px; }

.p-hd {
  background-image:
    linear-gradient(90deg, #8ea9ca 4px, transparent 4px),
    linear-gradient(90deg, #8ea9ca 4px, transparent 4px),
    linear-gradient(90deg, #8ea9ca 4px, transparent 4px);
  background-size: 8px 1px;
  background-repeat: repeat-x;
  background-position: 0 3px, 4px 9px, 0 15px;
}

.p-vdash {
  background-image:
    linear-gradient(#8ea9ca 4px, transparent 4px),
    linear-gradient(#8ea9ca 4px, transparent 4px);
  background-size: 6px 8px, 6px 8px;
  background-repeat: repeat;
  background-position: 2px 1px, 5px 5px;
  background-image:
    linear-gradient(90deg, #8ea9ca 1px, transparent 1px),
    linear-gradient(90deg, #8ea9ca 1px, transparent 1px);
  background-size: 6px 4px, 6px 4px;
  background-repeat: repeat-x;
  background-position: 2px 3px, 5px 11px;
}

.p-brick { background-image: repeating-linear-gradient(#8ea9ca 0 1px, transparent 1px 5px), repeating-linear-gradient(90deg, #8ea9ca 0 1px, transparent 1px 8px); }

.p-chk,
.p-chkl,
.p-lconf {
  background-image: repeating-conic-gradient(#8ea9ca 0 25%, #fff 0 50%);
  background-size: 8px 8px;
}

.p-chk { background-image: repeating-conic-gradient(#9ab3d1 0 25%, #e6eef6 0 50%); background-size: 4px 4px; }
.p-lconf { background-size: 10px 9px; }

.p-sph,
.p-scale,
.p-ball {
  background-image: radial-gradient(circle, #7f9dc6 0 2.5px, transparent 3px);
  background-size: 6px 6px;
}

.p-sph { background-color: #9cb6d6; background-image: radial-gradient(circle, #dce7f3 0 1.2px, transparent 1.6px); background-size: 4px 4px; }
.p-scale { background-image: radial-gradient(circle, transparent 0 1.5px, #7f9dc6 2px 3px, transparent 3.2px); background-size: 7px 6px; }

/* watermark */

.watermark {
  position: absolute;
  left: 596px;
  top: 620px;
  width: 154px;
  height: 50px;
  z-index: 3;
}

.wm-square {
  width: 48px;
  height: 50px;
  background: #4b90da;
  border-radius: 6px 6px 0 0;
}

.wm-cn {
  position: absolute;
  left: 54px;
  top: 1px;
  font: bold 23px/26px "Noto Sans CJK SC", sans-serif;
  color: #2e8fdf;
  white-space: nowrap;
}

.wm-leaf {
  position: absolute;
  left: 58px;
  top: 13px;
}

.wm-en {
  position: absolute;
  left: 30px;
  top: 22px;
  font: bold 28px/28px "Liberation Sans", sans-serif;
  letter-spacing: -1.4px;
  color: #62a530;
  white-space: nowrap;
  -webkit-text-stroke: .3px #fff;
}

.wm-site {
  position: absolute;
  left: 131px;
  top: 29px;
  font: bold 8px/10px "Noto Sans CJK SC", sans-serif;
  color: #c0392b;
  white-space: nowrap;
}

.wm-net {
  position: absolute;
  left: 128px;
  top: 38px;
  font: bold 10px/11px "Liberation Mono", monospace;
  color: #5a8a3a;
}
```
